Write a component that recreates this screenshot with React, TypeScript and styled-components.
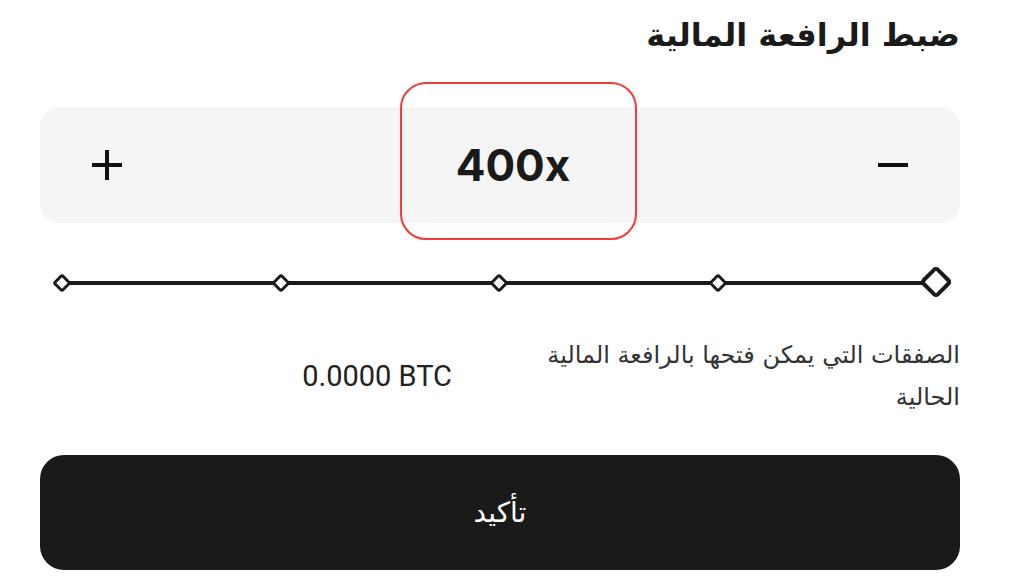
import styled, { createGlobalStyle } from "styled-components";

const GlobalStyle = createGlobalStyle`
  html, body {
    margin: 0;
    padding: 0;
    background: #ffffff;
  }
  body {
    font-family: "DejaVu Sans", "Noto Sans", sans-serif;
  }
`;

const Sheet = styled.div`
  direction: rtl;
  width: 1024px;
  height: 576px;
  box-sizing: border-box;
  padding: 14px 64px 0 40px;
  background: #fff;
  overflow: hidden;
`;

const Title = styled.h1`
  margin: 0;
  font-size: 32px;
  font-weight: 700;
  line-height: 43px;
  color: #1a1a1a;
`;

const Stepper = styled.div`
  position: relative;
  margin-top: 50px;
  height: 116px;
  border-radius: 20px;
  background: #f5f5f5;
  display: grid;
  grid-template-columns: 1fr auto 1fr;
  align-items: center;
  padding: 0 52px;
`;

const StepButton = styled.button<{ $side: "start" | "end" }>`
  justify-self: ${({ $side }) => $side};
  width: 30px;
  height: 30px;
  padding: 0;
  border: none;
  background: none;
  display: flex;
  align-items: center;
  justify-content: center;
  cursor: pointer;
`;

const Value = styled.div`
  font-family: Inter, "Liberation Sans", sans-serif;
  font-size: 44px;
  font-weight: 700;
  color: #1a1a1a;
  direction: ltr;
  padding-left: 26px;
`;

const Highlight = styled.div`
  position: absolute;
  left: 360px;
  top: -25px;
  width: 237px;
  height: 158px;
  box-sizing: border-box;
  border: 2px solid #f23b3b;
  border-radius: 26px;
  pointer-events: none;
`;

const Slider = styled.svg`
  display: block;
  margin-top: 39px;
  width: 920px;
  height: 40px;
`;

const InfoRow = styled.div`
  margin-top: 32px;
  display: flex;
  align-items: center;
  gap: 86px;
`;

const InfoLabel = styled.p`
  margin: 0;
  width: 422px;
  font-size: 24px;
  line-height: 42px;
  color: #333;
`;

const InfoValue = styled.div`
  font-family: Roboto, "Liberation Sans", sans-serif;
  font-size: 29px;
  color: #222;
  direction: ltr;
`;

const ConfirmButton = styled.button`
  display: block;
  width: 100%;
  margin-top: 37px;
  height: 115px;
  border: none;
  border-radius: 24px;
  background: #1a1a1a;
  color: #fff;
  font-family: "DejaVu Sans", sans-serif;
  font-size: 28px;
  cursor: pointer;
`;

const Minus = () => (
  <svg width="30" height="30" viewBox="0 0 30 30">
    <path d="M0 15h30" stroke="#111" strokeWidth="4" />
  </svg>
);

const Plus = () => (
  <svg width="30" height="30" viewBox="0 0 30 30">
    <path d="M0 15h30M15 0v30" stroke="#111" strokeWidth="4" />
  </svg>
);

const marks = [22, 241, 459, 678];

function LeverageTrack() {
  return (
    <Slider viewBox="0 0 920 40">
      <line x1="22" y1="21" x2="896" y2="21" stroke="#1a1a1a" strokeWidth="4" />
      {marks.map((x) => (
        <rect
          key={x}
          x={x - 5.5}
          y={21 - 5.5}
          width="11"
          height="11"
          rx="1.5"
          transform={`rotate(45 ${x} 21)`}
          fill="#fff"
          stroke="#1a1a1a"
          strokeWidth="3"
        />
      ))}
      <rect
        x={896 - 10}
        y={20 - 10}
        width="20"
        height="20"
        rx="2.5"
        transform="rotate(45 896 20)"
        fill="#fff"
        stroke="#1a1a1a"
        strokeWidth="4"
      />
    </Slider>
  );
}

export default function App() {
  return (
    <>
      <GlobalStyle />
      <Sheet>
        <Title>ضبط الرافعة المالية</Title>
        <Stepper>
          <StepButton $side="start" aria-label="decrease">
            <Minus />
          </StepButton>
          <Value>400x</Value>
          <StepButton $side="end" aria-label="increase">
            <Plus />
          </StepButton>
          <Highlight />
        </Stepper>
        <LeverageTrack />
        <InfoRow>
          <InfoLabel>الصفقات التي يمكن فتحها بالرافعة المالية الحالية</InfoLabel>
          <InfoValue>0.0000 BTC</InfoValue>
        </InfoRow>
        <ConfirmButton>تأكيد</ConfirmButton>
      </Sheet>
    </>
  );
}
